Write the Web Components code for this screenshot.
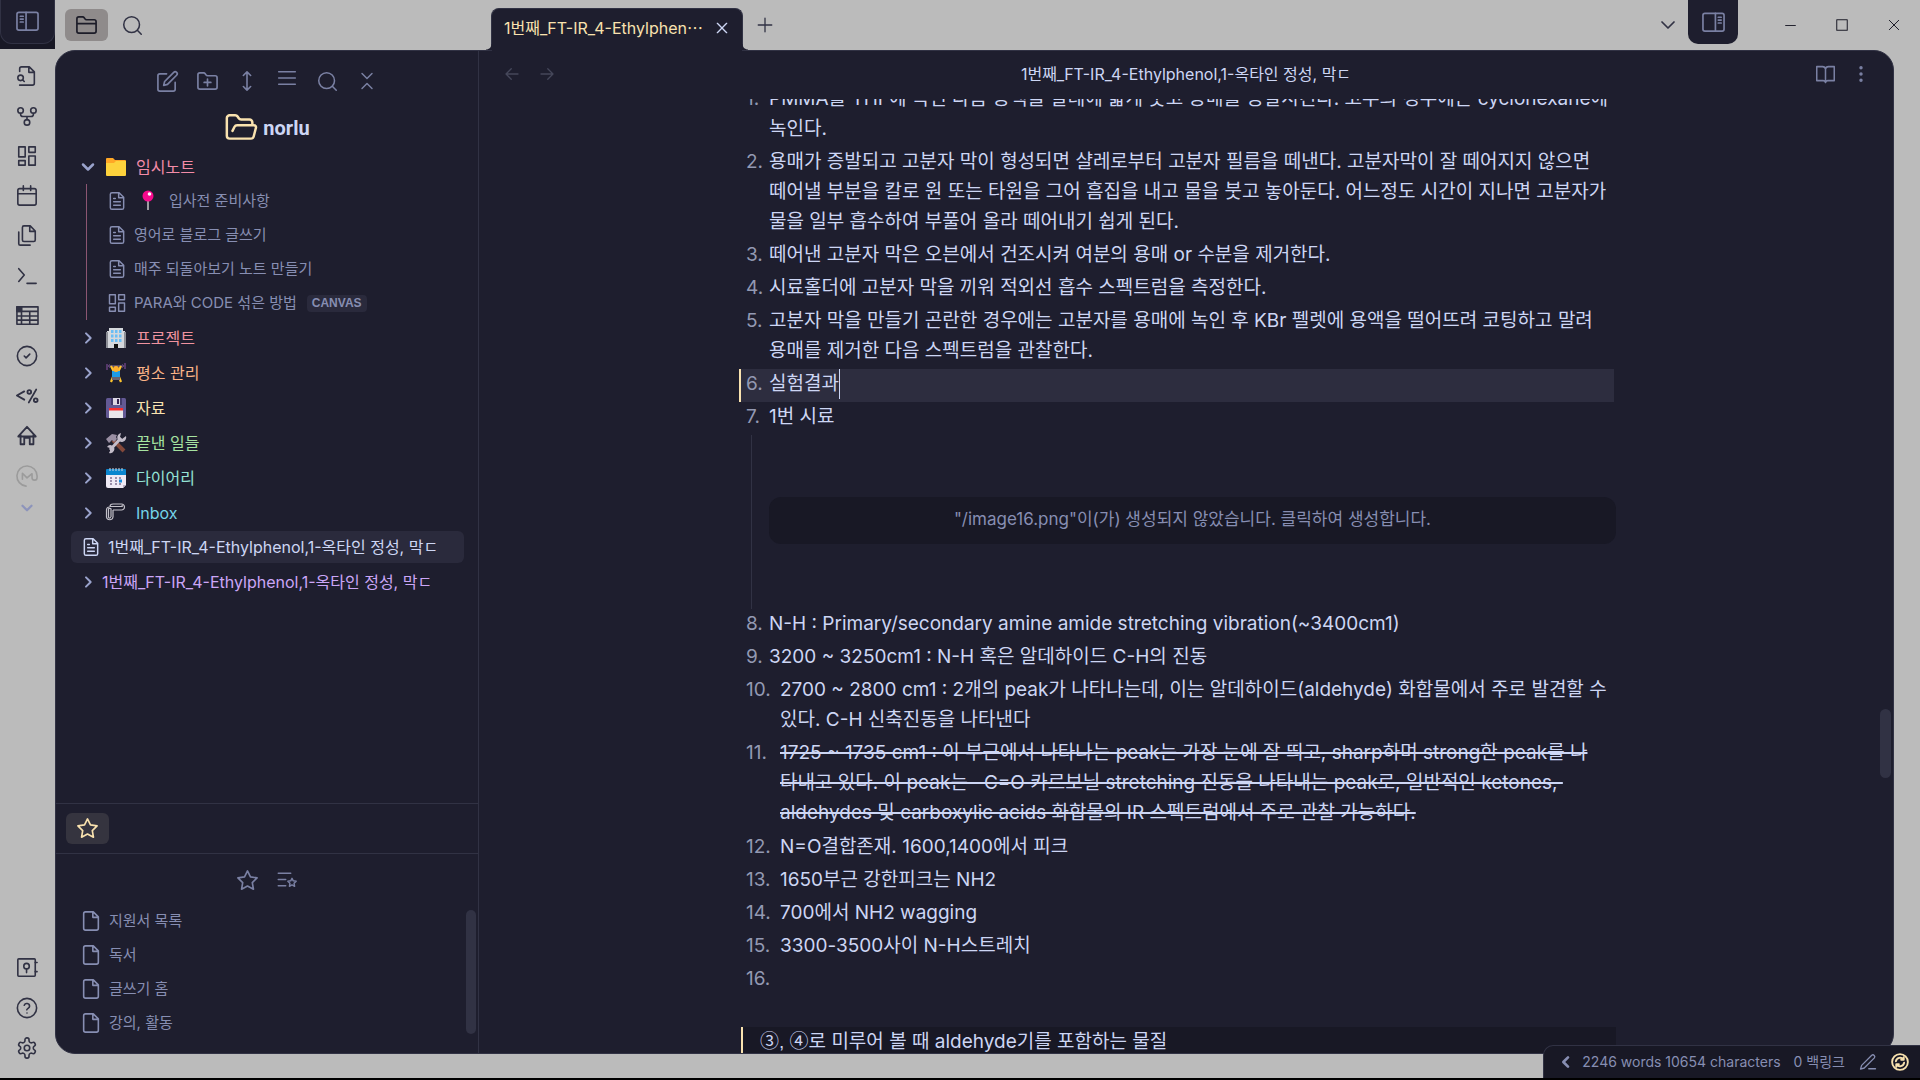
<!DOCTYPE html>
<html lang="ko">
<head>
<meta charset="utf-8">
<title>1번째_FT-IR_4-Ethylphenol,1-옥타인 정성, 막ㄷ</title>
<style>
  :root {
    --base: #1e1e2e;
    --mantle: #181825;
    --line: #313244;
    --chrome: #bbbbbb;
    --ink: #313244;
    --text: #cdd6f4;
    --muted: #878eb2;
    --icon: #7a80a3;
    --accent: #f9e2af;
  }
  body {
    margin: 0;
    background: #000;
    color: var(--text);
    font: 15px/20px Inter, "Noto Sans CJK KR", sans-serif;
  }
  .circled { font-family: "Liberation Sans", "Noto Sans CJK KR", sans-serif; }
</style>
</head>
<body>
<app-shell>
  <side-ribbon slot="ribbon"></side-ribbon>
  <title-bar slot="title"></title-bar>
  <file-explorer slot="sidebar">
    <tree-folder icon="folderEmoji" color="#f38ba8" label="임시노트" open>
      <tree-file icon="fileText" emoji="pin">입사전 준비사항</tree-file>
      <tree-file icon="fileText">영어로 블로그 글쓰기</tree-file>
      <tree-file icon="fileText">매주 되돌아보기 노트 만들기</tree-file>
      <tree-file icon="grid" tag="CANVAS">PARA와 CODE 섞은 방법</tree-file>
    </tree-folder>
    <tree-folder icon="building" color="#f0929f" label="프로젝트"></tree-folder>
    <tree-folder icon="lifter" color="#fab387" label="평소 관리"></tree-folder>
    <tree-folder icon="floppy" color="#f9e2af" label="자료"></tree-folder>
    <tree-folder icon="tools" color="#a6e3a1" label="끝낸 일들"></tree-folder>
    <tree-folder icon="calendarEmoji" color="#94e2d5" label="다이어리"></tree-folder>
    <tree-folder icon="clips" color="#74d3e8" label="Inbox"></tree-folder>
    <tree-file icon="fileText" active>1번째_FT-IR_4-Ethylphenol,1-옥타인 정성, 막ㄷ</tree-file>
    <tree-folder color="#cba6f7" label="1번째_FT-IR_4-Ethylphenol,1-옥타인 정성, 막ㄷ"></tree-folder>
  </file-explorer>
  <bookmark-pane slot="sidebar"></bookmark-pane>
  <note-view slot="main">
    <note-item n="1">PMMA를 THF에 녹인 다음 용액을 샬레에 얇게 붓고 용매를 증발시킨다. 고무의 경우에는 cyclohexane에<br>녹인다.</note-item>
    <note-item n="2">용매가 증발되고 고분자 막이 형성되면 샬레로부터 고분자 필름을 떼낸다. 고분자막이 잘 떼어지지 않으면<br>떼어낼 부분을 칼로 원 또는 타원을 그어 흠집을 내고 물을 붓고 놓아둔다. 어느정도 시간이 지나면 고분자가<br>물을 일부 흡수하여 부풀어 올라 떼어내기 쉽게 된다.</note-item>
    <note-item n="3">떼어낸 고분자 막은 오븐에서 건조시켜 여분의 용매 or 수분을 제거한다.</note-item>
    <note-item n="4">시료홀더에 고분자 막을 끼워 적외선 흡수 스펙트럼을 측정한다.</note-item>
    <note-item n="5">고분자 막을 만들기 곤란한 경우에는 고분자를 용매에 녹인 후 KBr 펠렛에 용액을 떨어뜨려 코팅하고 말려<br>용매를 제거한 다음 스펙트럼을 관찰한다.</note-item>
    <note-item n="6" active>실험결과</note-item>
    <note-item n="7">1번 시료</note-item>
    <note-embed>"/image16.png"이(가) 생성되지 않았습니다. 클릭하여 생성합니다.</note-embed>
    <note-item n="8">N-H : Primary/secondary amine amide stretching vibration(~3400cm1)</note-item>
    <note-item n="9">3200 ~ 3250cm1 : N-H 혹은 알데하이드 C-H의 진동</note-item>
    <note-item n="10">2700 ~ 2800 cm1 : 2개의 peak가 나타나는데, 이는 알데하이드(aldehyde) 화합물에서 주로 발견할 수<br>있다. C-H 신축진동을 나타낸다</note-item>
    <note-item n="11" struck>1725 ~ 1735 cm1 : 이 부근에서 나타나는 peak는 가장 눈에 잘 띄고, sharp하며 strong한 peak를 나<br>타내고 있다. 이 peak는&nbsp;&nbsp; C=O 카르보닐 stretching 진동을 나타내는 peak로, 일반적인 ketones,&nbsp;<br>aldehydes 및 carboxylic acids 화합물의 IR 스펙트럼에서 주로 관찰 가능하다.</note-item>
    <note-item n="12">N=O결합존재. 1600,1400에서 피크</note-item>
    <note-item n="13">1650부근 강한피크는 NH2</note-item>
    <note-item n="14">700에서 NH2 wagging</note-item>
    <note-item n="15">3300-3500사이 N-H스트레치</note-item>
    <note-item n="16"></note-item>
    <note-quote><span class="circled">③, ④</span>로 미루어 볼 때 aldehyde기를 포함하는 물질</note-quote>
  </note-view>
  <status-bar slot="status"></status-bar>
</app-shell>

<script>
// Line icons share a 24 unit box and take their colour from the text
const LINE_ICONS = {
  panelLeft: '<rect x="1" y="2.500" width="22" height="18.500" rx="2"/><path d="M10.500 2.500v18.500M4.500 6.500h3M4.500 9.500h3M4.500 12.500h3"/>',
  panelRight: '<rect x="1" y="2.500" width="22" height="18.500" rx="2"/><path d="M14 2.500v18.500M17 6.500h3M17 9.500h3M17 12.500h3"/>',
  folder: '<path d="M4 20h16a2 2 0 0 0 2-2V8a2 2 0 0 0-2-2h-7.900a2 2 0 0 1-1.700-.9L9.600 3.900A2 2 0 0 0 7.900 3H4a2 2 0 0 0-2 2v13c0 1.100.9 2 2 2zM2 10h20"/>',
  folderOpen: '<path d="m6 14 1.450-2.900A2 2 0 0 1 9.240 10H21a1.500 1.500 0 0 1 1.500 2l-1.550 6a2 2 0 0 1-1.940 1.500H4a2 2 0 0 1-2-2V5c0-1.100.9-2 2-2h3.930a2 2 0 0 1 1.660.9l.82 1.200a2 2 0 0 0 1.660.9H18a2 2 0 0 1 2 2v2"/>',
  search: '<circle cx="11" cy="11" r="9"/><path d="m22 22-4.500-4.500"/>',
  fileSearch: '<path d="M4 7V4a2 2 0 0 1 2-2h8.500L20 7.500V20a2 2 0 0 1-2 2H4M14 2v6h6"/><circle cx="5" cy="14" r="3"/><path d="m9 18-1.800-1.800"/>',
  fork: '<circle cx="12" cy="19" r="3"/><circle cx="5" cy="6" r="3"/><circle cx="19" cy="6" r="3"/><path d="M5 9v1c0 1.500 1 2.500 2.500 2.500h9C18 12.500 19 11.500 19 10V9M12 12.500V16"/>',
  grid: '<path d="M3 2h7v11H3zM14 2h7v6h-7zM14 12h7v10h-7zM3 17h7v5H3z"/>',
  calendar: '<rect x="2" y="4" width="20" height="18" rx="2"/><path d="M16 1v5M8 1v5M2 9.500h20"/>',
  files: '<path d="M15.500 1H8.600C7.700 1 7 1.700 7 2.600v13.800c0 .9.700 1.600 1.600 1.600h10.800c.9 0 1.600-.7 1.600-1.600V6.500zM15 1v6h6M3 7.600v12.800c0 .9.700 1.600 1.600 1.600h10.800"/>',
  terminal: '<path d="m3 4 6 7-6 7M12 20h10"/>',
  table: '<path d="M1 2h23v19H1zM1 7h23M1 12h23M1 16.500h23M6 2v19M15 7v14"/><path d="M1 2h5v5H1z" fill="currentColor"/>',
  check: '<circle cx="12" cy="12" r="10.500"/><path d="m9 12 2 2 4-4"/>',
  code: '<path d="M9 7 1 11.500 9 16M22 5 14 19"/><circle cx="14.500" cy="7.500" r="2"/><circle cx="21.500" cy="16.500" r="2"/>',
  home: '<path d="M5 11v10h4v-7h6v7h4V11M2.500 12.500 12 2l9.500 10.500z"/>',
  swirl: '<path d="M11 23A11 11 0 1 1 23 12v1.500c0 4-5.500 4-5.500 0V9.500L12 14 7 9v6.500"/>',
  chevronDown: '<path d="m6 9 6 6 6-6"/>',
  chevronRight: '<path d="m9 5 7 7-7 7"/>',
  chevronLeft: '<path d="m15 5-7 7 7 7"/>',
  vault: '<rect x="2" y="2" width="19" height="19" rx="1"/><circle cx="11.500" cy="10" r="3"/><path d="M11.500 13v4M21 6h2M21 16h2"/>',
  help: '<circle cx="12" cy="12" r="10.500"/><path d="M9 9a3 3 0 0 1 5.800 1c0 2-3 2.500-3 4M12 17.500h.01"/>',
  gear: '<path d="M12.220 1h-.44a2 2 0 0 0-2 2v1.180a2 2 0 0 1-1 1.730l-.43.25a2 2 0 0 1-2 0l-.15-.08a2 2 0 0 0-2.730.73l-.22.38a2 2 0 0 0 .73 2.730l.15.100a2 2 0 0 1 1 1.720v.51a2 2 0 0 1-1 1.740l-.15.09a2 2 0 0 0-.73 2.730l.22.38a2 2 0 0 0 2.730.73l.15-.08a2 2 0 0 1 2 0l.43.25a2 2 0 0 1 1 1.730V21a2 2 0 0 0 2 2h.44a2 2 0 0 0 2-2v-1.180a2 2 0 0 1 1-1.730l.43-.25a2 2 0 0 1 2 0l.15.08a2 2 0 0 0 2.730-.73l.22-.39a2 2 0 0 0-.73-2.730l-.15-.08a2 2 0 0 1-1-1.740v-.5a2 2 0 0 1 1-1.740l.15-.09a2 2 0 0 0 .73-2.730l-.22-.38a2 2 0 0 0-2.730-.73l-.15.08a2 2 0 0 1-2 0l-.43-.25a2 2 0 0 1-1-1.730V3a2 2 0 0 0-2-2z"/><circle cx="12" cy="12" r="3"/>',
  edit: '<path d="M11 4H4a2 2 0 0 0-2 2v14a2 2 0 0 0 2 2h14a2 2 0 0 0 2-2v-7M18.500 2.500a2.100 2.100 0 0 1 3 3L12 15l-4 1 1-4z"/>',
  folderPlus: '<path d="M4 20h16a2 2 0 0 0 2-2V8a2 2 0 0 0-2-2h-7.900a2 2 0 0 1-1.700-.9L9.600 3.900A2 2 0 0 0 7.900 3H4a2 2 0 0 0-2 2v13c0 1.100.9 2 2 2zM12 9.500v7M8.500 13h7"/>',
  upDown: '<path d="m8 6 4-4 4 4M8 18l4 4 4-4M12 2v20"/>',
  lines: '<path d="M2 1h20M2 8.500h20M2 16h20"/>',
  collapse: '<path d="m6 21 6-6 6 6M6 3l6 6 6-6"/>',
  fileText: '<path d="M14.500 2H6a2 2 0 0 0-2 2v16a2 2 0 0 0 2 2h12a2 2 0 0 0 2-2V7.500zM14 2v6h6M8 9h2M8 13h8M8 17h8"/>',
  file: '<path d="M14.500 2H6a2 2 0 0 0-2 2v16a2 2 0 0 0 2 2h12a2 2 0 0 0 2-2V7.500zM14 2v6h6"/>',
  star: '<path d="m12 2 3.090 6.260L22 9.270l-5 4.870 1.180 6.880L12 17.770l-6.180 3.250L7 14.140 2 9.270l6.910-1.010z"/>',
  starList: '<path d="M1.500 4h15M1.500 11.500h9M1.500 19h9"/><path d="m18 10 1.500 3 3.500.5-2.500 2.500.6 3.500-3.100-1.600-3.100 1.600.6-3.500L13 13.500l3.500-.5z"/>',
  arrowLeft: '<path d="M20 12H4M11 5l-7 7 7 7"/>',
  arrowRight: '<path d="M4 12h16M13 5l7 7-7 7"/>',
  close: '<path d="M5 5l14 14M19 5 5 19"/>',
  plus: '<path d="M12 3v18M3 12h18"/>',
  minus: '<path d="M3 12h18"/>',
  square: '<path d="M3 3h18v18H3z"/>',
  book: '<path d="M2 3h6.500a3.500 3.500 0 0 1 3.500 3v15a3 3 0 0 0-3-2H2zM22 3h-6.500A3.500 3.500 0 0 0 12 6v15a3 3 0 0 1 3-2h7z"/>',
  dots: '<g fill="currentColor"><circle cx="12" cy="4.500" r="1.200"/><circle cx="12" cy="12" r="1.200"/><circle cx="12" cy="19.500" r="1.200"/></g>',
  pen: '<path d="M13 21h9M17 3a2.500 2.500 0 0 1 3.500 3.500L7 20l-5 1.500L3.500 16.500z"/>',
  sync: '<circle cx="12" cy="12" r="10.500"/><path d="M6.500 11a5.700 5.700 0 0 1 10-2.500M17.500 13a5.700 5.700 0 0 1-10 2.500M17 5.500v3.500h-3.500M7 18.500V15h3.500"/>'
};

// Colour icons share a 20 unit box
const COLOR_ICONS = {
  folderEmoji: '<path d="M0 2q0-1 1-1h6l2 2h10q1 0 1 1v6H0z" fill="#ffa726"/><path d="M0 6h8l2-2h10v14q0 1-1 1H1q-1 0-1-1z" fill="#fdd23c"/>',
  pin: '<path d="M10 9v10" stroke="#c9c9c9" stroke-width="1.500"/><circle cx="10" cy="5" r="5.500" fill="#f70a8d"/><circle cx="11.500" cy="3" r="1.800" fill="#fff"/>',
  building: '<path d="M3 0h14v3h2v17H1V3h2z" fill="#d5d8dc"/><path d="M0 4h2v16H0zM18 4h2v16h-2z" fill="#8d8f96"/><path d="M5 2h2.500v3H5zM9 2h2.500v3H9zM13 2h2.500v3H13zM5 6.500h2.500v3H5zM9 6.500h2.500v3H9zM13 6.500h2.500v3H13zM5 11h2.500v3H5zM9 11h2.500v3H9zM13 11h2.500v3H13z" fill="#69bdf5"/><path d="M8 16h4v4H8z" fill="#111"/>',
  lifter: '<path d="M1 3h18" stroke="#8d7aa5" stroke-width="1"/><path d="M0 1h2v6H0zM18 0h2v6h-2zM3 1h1v4H3zM16 1h1v4h-1z" fill="#55386a"/><path d="m5 3 3 6M15 3l-3 6M7 14l-2 5M13 14l2 5" stroke="#ffc52e" stroke-width="2.200"/><path d="M6 8h8v7H6z" fill="#1d9ce8"/><circle cx="10" cy="6" r="3" fill="#ffb02e"/><path d="M6 14h8v3H6z" fill="#6a6470"/>',
  floppy: '<rect width="20" height="20" rx="1.500" fill="#635994"/><path d="M5 0h11v7H5z" fill="#433b6b"/><path d="M7 0h7v7H7z" fill="#ddd8e4"/><path d="M11 1h2v5h-2z" fill="#33234f"/><path d="M3 10h14v10H3z" fill="#e8e6ea"/><path d="M3 10h14v2.500H3z" fill="#f92f2f"/>',
  tools: '<path d="m7 7 11 11" stroke="#83483a" stroke-width="4"/><path d="M0 6 6 1l5 1-1 2 1 2-3 3-2-2-3 3z" fill="#9a8fa3"/><path d="m4 17 11-12" stroke="#c3bcc9" stroke-width="3"/><path d="M20 3a4.500 4.500 0 1 1-5-3l-1 4 2 2z" fill="#c3bcc9"/><path d="M3 20a4 4 0 1 0-2-6l3 1v3z" fill="#c3bcc9"/>',
  calendarEmoji: '<path d="M0 3h20v14l-3 3H2q-2 0-2-2z" fill="#efeaf5"/><path d="M0 2q0-1 1-1h18q1 0 1 1v5H0z" fill="#0a86cf"/><path d="M4 0v3M7 0v3M10 0v3M13 0v3M16 0v3" stroke="#d2d6e0"/><path d="M4 9h2v2H4zM9 9h2v2H9zM13 9h2v2h-2zM4 12h2v2H4zM9 12h2v2H9zM4 15h2v2H4zM9 15h2v2H9zM13 15h2v2h-2z" fill="#9b8fab"/><path d="M13 11.500h3v3h-3z" fill="#178fe0"/><path d="m17 20 3-3h-3z" fill="#b9b0c4"/>',
  clips: '<g fill="none" stroke="#c3c1c9" stroke-width="1.200"><path d="M7 7v7a3.300 3.300 0 0 1-6.500 0V7C.5 5 2 4 3.500 4M5 14V6c0-1-2.500-1-2.500 0v8c0 1.500 2 1.500 2 0"/><path d="M7 7h8.500a3 3 0 0 0 0-6H7C5 1 4 2 4 3.500h11.500c1.500 0 1.500-1 0-1"/></g>'
};

function define(name, html, setup) {
  const template = document.createElement("template");
  template.innerHTML = html;
  customElements.define(name, class extends HTMLElement {
    constructor() {
      super();
      this.attachShadow({ mode: "open" });
    }

    connectedCallback() {
      if (this.shadowRoot.childNodes.length) return;
      this.shadowRoot.append(template.content.cloneNode(true));
      if (setup) setup(this, this.shadowRoot);
    }
  });
}

define("ui-icon", `
  <style>
    :host { display: inline-flex; flex: none; }
    svg { display: block; overflow: visible; }
  </style>
`, (host, root) => {
  const name = host.getAttribute("name");
  const size = host.getAttribute("size") || 20;
  const stroke = host.getAttribute("stroke") || 1.75;
  root.innerHTML += COLOR_ICONS[name]
    ? `<svg width="${size}" height="${size}" viewBox="0 0 20 20" aria-hidden="true">${COLOR_ICONS[name]}</svg>`
    : `<svg width="${size}" height="${size}" viewBox="0 0 24 24" fill="none" stroke="currentColor" stroke-width="${stroke}" stroke-linecap="round" stroke-linejoin="round" aria-hidden="true">${LINE_ICONS[name]}</svg>`;
});

define("icon-button", `
  <style>
    :host { display: flex; width: 40px; height: 40px; flex: none; }
    button {
      display: flex;
      flex: 1;
      align-items: center;
      justify-content: center;
      padding: 0;
      border: 0;
      border-radius: inherit;
      background: none;
      color: inherit;
      cursor: pointer;
    }
  </style>
  <button type="button"></button>
`, (host, root) => {
  const button = root.querySelector("button");
  const stroke = host.getAttribute("stroke") || 1.75;
  button.setAttribute("aria-label", host.getAttribute("label"));
  button.innerHTML = `<ui-icon name="${host.getAttribute("icon")}" size="${host.getAttribute("size") || 22}" stroke="${stroke}"></ui-icon>`;
});

define("side-ribbon", `
  <style>
    :host {
      display: flex;
      flex-direction: column;
      align-items: center;
      height: 100%;
      box-sizing: border-box;
      padding: 0 1px 10px 0;
      color: var(--ink);
    }
    .corner { align-self: stretch; height: 49px; margin: 0 -1px 7px 0; background: var(--mantle); }
    .corner icon-button {
      box-sizing: border-box;
      width: 100%;
      height: 44px;
      border: 1px solid var(--line);
      border-top: 0;
      border-radius: 0 0 12px 12px;
      background: var(--base);
      color: var(--icon);
    }
    .faded { color: #9b9b9b; }
    .more { height: 24px; color: #8d94bb; }
    .gap { flex: 1; }
  </style>
  <div class="corner"><icon-button icon="panelLeft" size="23" label="왼쪽 사이드바"></icon-button></div>
  <icon-button icon="fileSearch" label="빠른 전환"></icon-button>
  <icon-button icon="fork" label="그래프 뷰"></icon-button>
  <icon-button icon="grid" label="캔버스"></icon-button>
  <icon-button icon="calendar" label="데일리 노트"></icon-button>
  <icon-button icon="files" label="템플릿"></icon-button>
  <icon-button icon="terminal" label="명령어"></icon-button>
  <icon-button icon="table" label="표"></icon-button>
  <icon-button icon="check" label="할 일"></icon-button>
  <icon-button icon="code" label="템플레이터" stroke="2"></icon-button>
  <icon-button icon="home" label="홈" stroke="2"></icon-button>
  <icon-button class="faded" icon="swirl" label="동기화"></icon-button>
  <icon-button class="more" icon="chevronDown" size="18" stroke="3" label="더 보기"></icon-button>
  <div class="gap"></div>
  <icon-button icon="vault" label="보관함"></icon-button>
  <icon-button icon="help" label="도움말"></icon-button>
  <icon-button icon="gear" label="설정"></icon-button>
`);

define("title-bar", `
  <style>
    :host { display: flex; align-items: center; height: 50px; color: var(--ink); }
    .left { display: flex; align-items: center; gap: 3px; width: 414px; padding-left: 10px; }
    .left icon-button { width: 43px; height: 32px; border-radius: 6px; }
    .left .on { background: #8f8b8b; color: #1c1c28; }
    .tab {
      position: relative;
      display: flex;
      align-items: center;
      align-self: flex-end;
      justify-content: space-between;
      box-sizing: border-box;
      width: 252px;
      height: 43px;
      margin: 0 2px -1px 12px;
      padding: 0 8px 4px 12px;
      border: 1px solid var(--line);
      border-bottom: 0;
      border-radius: 8px 8px 0 0;
      background: var(--base);
      color: var(--accent);
      font-size: 16px;
      z-index: 1;
    }
    /* flared feet of the tab */
    .tab::before, .tab::after {
      content: "";
      position: absolute;
      bottom: 1px;
      width: 6px;
      height: 6px;
    }
    .tab::before { right: 100%; background: radial-gradient(circle at 0 0, transparent 5px, var(--base) 6px); }
    .tab::after { left: 100%; background: radial-gradient(circle at 100% 0, transparent 5px, var(--base) 6px); }
    .tab a { color: inherit; text-decoration: none; white-space: nowrap; }
    .tab icon-button { width: 24px; color: var(--text); }
    .gap { flex: 1; }
    .right {
      align-self: flex-start;
      width: 50px;
      height: 44px;
      margin-right: 26px;
      border-radius: 0 0 10px 10px;
      background: var(--base);
      color: var(--icon);
    }
    .window { width: 52px; color: #1c1c28; }
  </style>
  <div class="left">
    <icon-button class="on" icon="folder" size="23" label="파일 탐색기"></icon-button>
    <icon-button icon="search" size="21" label="검색"></icon-button>
  </div>
  <div class="tab">
    <a href="#">1번째_FT-IR_4-Ethylphen⋯</a>
    <icon-button icon="close" size="16" stroke="2" label="탭 닫기"></icon-button>
  </div>
  <icon-button icon="plus" size="18" label="새 탭"></icon-button>
  <div class="gap"></div>
  <icon-button icon="chevronDown" size="24" label="탭 목록"></icon-button>
  <icon-button class="right" icon="panelRight" size="23" label="오른쪽 사이드바"></icon-button>
  <icon-button class="window" icon="minus" size="13" label="최소화"></icon-button>
  <icon-button class="window" icon="square" size="14" label="최대화"></icon-button>
  <icon-button class="window" icon="close" size="16" stroke="1.500" label="닫기"></icon-button>
`);

define("tree-file", `
  <style>
    :host { display: block; }
    a {
      display: flex;
      align-items: center;
      gap: 7px;
      height: 34px;
      color: var(--muted);
      text-decoration: none;
      white-space: nowrap;
    }
    :host([active]) a {
      height: 32px;
      margin: 1px 14px 1px 15px;
      padding-left: 10px;
      border-radius: 6px;
      background: #2a2a3c;
      color: var(--text);
      font-size: 16px;
    }
    .pin { margin: 0 4px; }
    small {
      margin-left: 3px;
      padding: 0 5px;
      border-radius: 4px;
      background: #2a2a3c;
      font: bold 12px/17px "Liberation Sans", sans-serif;
    }
  </style>
  <a href="#"><slot></slot></a>
`, (host, root) => {
  const link = root.querySelector("a");
  const emoji = host.getAttribute("emoji");
  const tag = host.getAttribute("tag");
  if (emoji) link.insertAdjacentHTML("afterbegin", `<ui-icon class="pin" name="${emoji}"></ui-icon>`);
  link.insertAdjacentHTML("afterbegin", `<ui-icon name="${host.getAttribute("icon")}" size="20"></ui-icon>`);
  if (tag) link.insertAdjacentHTML("beforeend", `<small>${tag}</small>`);
});

define("tree-folder", `
  <style>
    :host { display: block; }
    button {
      display: flex;
      align-items: center;
      width: 100%;
      height: 35px;
      padding: 0 0 0 24px;
      border: 0;
      background: none;
      font: inherit;
      font-size: 16px;
      white-space: nowrap;
      cursor: pointer;
    }
    .arrow { margin-right: 6px; color: #9aa3cc; }
    .pic { margin: 0 10px 0 4px; }
    .children { display: none; margin: 0 0 0 30px; padding-left: 20px; border-left: 1px solid #8c5672; }
    :host([open]) .arrow { margin: 0 4px 0 -2px; }
    :host([open]) .children { display: block; }
  </style>
  <button type="button"></button>
  <div class="children"><slot></slot></div>
`, (host, root) => {
  const button = root.querySelector("button");
  const icon = host.getAttribute("icon");
  const open = host.hasAttribute("open");
  button.style.color = host.getAttribute("color");
  button.setAttribute("aria-expanded", open);
  button.innerHTML = `
    <ui-icon class="arrow" name="${open ? "chevronDown" : "chevronRight"}" size="${open ? 20 : 16}" stroke="3"></ui-icon>
    ${icon ? `<ui-icon class="pic" name="${icon}"></ui-icon>` : ""}
    <span>${host.getAttribute("label")}</span>`;
});

define("file-explorer", `
  <style>
    :host { display: flex; flex: 1; flex-direction: column; min-height: 0; }
    nav { display: flex; justify-content: center; padding: 10px 0 2px; color: var(--icon); }
    h1 {
      display: flex;
      align-items: center;
      justify-content: center;
      gap: 5px;
      box-sizing: border-box;
      height: 46px;
      margin: 0;
      padding-top: 3px;
      font: bold 20px/28px Roboto, sans-serif;
    }
    h1 ui-icon { color: var(--accent); }
  </style>
  <nav>
    <icon-button icon="edit" size="23" label="새 노트"></icon-button>
    <icon-button icon="folderPlus" size="23" label="새 폴더"></icon-button>
    <icon-button icon="upDown" label="정렬"></icon-button>
    <icon-button icon="lines" size="20" label="자동 표시"></icon-button>
    <icon-button icon="search" size="21" label="검색"></icon-button>
    <icon-button icon="collapse" size="20" label="모두 접기"></icon-button>
  </nav>
  <h1><ui-icon name="folderOpen" size="34"></ui-icon>norlu</h1>
  <slot></slot>
`);

define("bookmark-pane", `
  <style>
    :host { display: flex; flex-direction: column; height: 249px; border-top: 1px solid var(--line); }
    .tabs { display: flex; align-items: center; height: 49px; padding-left: 10px; border-bottom: 1px solid var(--line); }
    .tabs icon-button { width: 43px; height: 31px; border-radius: 6px; background: #35343f; color: var(--accent); }
    nav { display: flex; justify-content: center; padding: 6px 0 4px; color: var(--icon); }
    .body { display: flex; flex: 1; justify-content: space-between; }
    a { display: flex; align-items: center; gap: 7px; height: 34px; padding-left: 24px; color: var(--muted); text-decoration: none; }
    .thumb { width: 10px; height: 124px; margin: 6px 2px; border-radius: 5px; background: var(--line); }
  </style>
  <div class="tabs"><icon-button icon="star" size="23" label="즐겨찾기"></icon-button></div>
  <nav>
    <icon-button icon="star" size="23" label="현재 노트 추가"></icon-button>
    <icon-button icon="starList" size="20" label="그룹"></icon-button>
  </nav>
  <div class="body">
    <div>
      <a href="#"><ui-icon name="file" size="22"></ui-icon>지원서 목록</a>
      <a href="#"><ui-icon name="file" size="22"></ui-icon>독서</a>
      <a href="#"><ui-icon name="file" size="22"></ui-icon>글쓰기 홈</a>
      <a href="#"><ui-icon name="file" size="22"></ui-icon>강의, 활동</a>
    </div>
    <div class="thumb"></div>
  </div>
`);

define("note-item", `
  <style>
    :host { display: flex; padding: 0 2px 3px 5px; white-space: nowrap; }
    :host([active]) { margin-right: 2px; background: #2d2d3f; box-shadow: -2px 0 var(--accent); }
    :host([struck]) { padding-bottom: 4px; }
    :host([struck]) .text { text-decoration: line-through 2px; }
    .num { width: 23px; color: #9399b2; }
    .num.wide { width: 34px; }
    .caret { display: inline-block; width: 1px; height: 30px; background: var(--text); vertical-align: top; }
  </style>
  <span class="num"></span><span class="text"><slot></slot></span>
`, (host, root) => {
  const n = host.getAttribute("n");
  const num = root.querySelector(".num");
  host.setAttribute("role", "listitem");
  num.textContent = n + ".";
  num.classList.toggle("wide", n.length > 1);
  if (host.hasAttribute("active")) root.querySelector(".text").insertAdjacentHTML("beforeend", '<i class="caret"></i>');
});

define("note-embed", `
  <style>
    :host {
      display: flex;
      align-items: center;
      box-sizing: border-box;
      height: 174px;
      margin-left: 10px;
      padding: 0 0 3px 17px;
      border-left: 1px solid var(--line);
    }
    button {
      flex: 1;
      height: 47px;
      padding: 0 0 4px;
      border: 0;
      border-radius: 12px;
      background: var(--mantle);
      color: var(--muted);
      font: inherit;
      font-size: 17px;
      cursor: pointer;
    }
  </style>
  <button type="button"><slot></slot></button>
`);

define("note-quote", `
  <style>
    :host { display: block; margin-top: 30px; padding: 0 17px 20px; border-left: 2px solid var(--accent); background: var(--mantle); }
  </style>
  <slot></slot>
`);

define("note-view", `
  <style>
    :host { display: flex; flex: 1; flex-direction: column; min-width: 0; min-height: 0; }
    header { display: flex; align-items: center; box-sizing: border-box; height: 48px; padding: 0 15px 2px; color: var(--icon); }
    header icon-button { width: 35px; }
    .nav { display: flex; color: #45475a; }
    h2 { flex: 1; margin: 0; color: var(--text); font-size: 16px; font-weight: 400; text-align: center; }
    .body { display: flex; flex: 1; min-height: 0; }
    .scroller { flex: 1; overflow: hidden; }
    .column { max-width: 875px; margin: 0 auto; padding-bottom: 60px; font-size: 19px; line-height: 30px; }
    .track { display: flex; flex-direction: column; width: 15px; }
    .track::before { content: ""; flex: 611; }
    .track::after { content: ""; flex: 275; }
    .thumb { flex: 69; width: 11px; margin-left: 2px; border-radius: 6px; background: var(--line); }
  </style>
  <header>
    <div class="nav">
      <icon-button icon="arrowLeft" size="18" label="뒤로"></icon-button>
      <icon-button icon="arrowRight" size="18" label="앞으로"></icon-button>
    </div>
    <h2>1번째_FT-IR_4-Ethylphenol,1-옥타인 정성, 막ㄷ</h2>
    <icon-button icon="book" size="21" label="읽기 보기"></icon-button>
    <icon-button icon="dots" size="20" label="더 보기"></icon-button>
  </header>
  <div class="body">
    <div class="scroller"><div class="column" role="list"><slot></slot></div></div>
    <div class="track"><div class="thumb"></div></div>
  </div>
`, (host, root) => {
  requestAnimationFrame(() => { root.querySelector(".scroller").scrollTop = 15; });
});

define("status-bar", `
  <style>
    :host {
      display: flex;
      align-items: center;
      box-sizing: border-box;
      height: 33px;
      padding: 0 4px 0 6px;
      border: 1px solid var(--line);
      border-width: 1px 0 0 1px;
      border-radius: 10px 0 0 0;
      background: var(--mantle);
      color: var(--muted);
      font-size: 14px;
    }
    icon-button { width: 32px; height: 32px; }
    icon-button:first-child { width: 24px; margin-right: 16px; }
    span + span { margin: 0 7px 0 13px; }
    .sync { color: var(--accent); }
  </style>
  <icon-button icon="chevronLeft" size="16" stroke="4" label="펼치기"></icon-button>
  <span>2246 words 10654 characters</span>
  <span>0 백링크</span>
  <icon-button icon="pen" size="18" label="편집 모드"></icon-button>
  <icon-button class="sync" icon="sync" size="18" stroke="2.500" label="동기화 상태"></icon-button>
`);

define("app-shell", `
  <style>
    :host {
      position: relative;
      display: grid;
      grid-template: 50px minmax(0, 1fr) / 55px minmax(0, 1fr);
      height: calc(100vh - 2px);
      background: var(--chrome);
    }
    .ribbon { grid-row: 1 / 3; }
    .panel {
      display: flex;
      box-sizing: border-box;
      margin: 0 26px 24px 0;
      overflow: hidden;
      border: 1px solid var(--line);
      border-radius: 20px;
      background: var(--base);
    }
    aside { display: flex; flex-direction: column; width: 422px; border-right: 1px solid var(--line); }
    main { display: flex; flex: 1; min-width: 0; }
    .status { position: absolute; right: 0; bottom: 0; }
  </style>
  <div class="ribbon"><slot name="ribbon"></slot></div>
  <slot name="title"></slot>
  <div class="panel">
    <aside><slot name="sidebar"></slot></aside>
    <main><slot name="main"></slot></main>
  </div>
  <div class="status"><slot name="status"></slot></div>
`);
</script>
</body>
</html>
